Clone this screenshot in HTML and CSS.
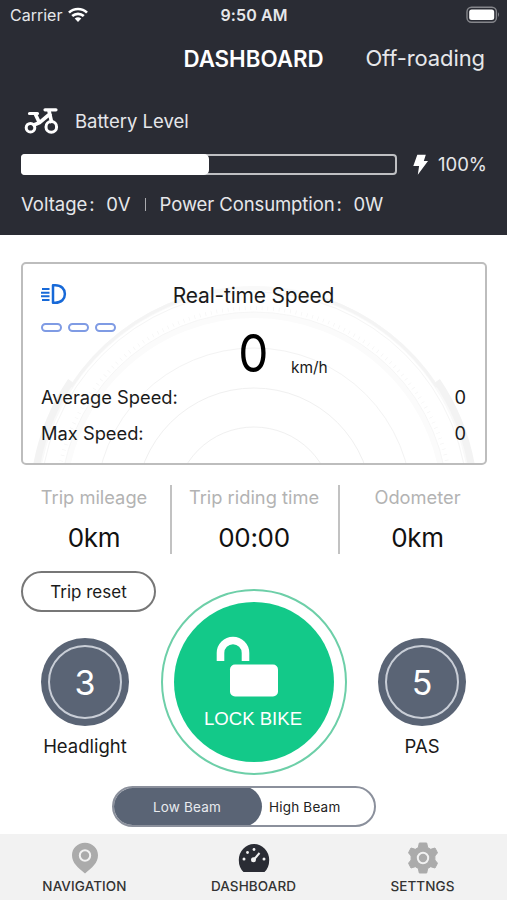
FILE: index.html
```html
<!DOCTYPE html>
<html lang="en">
<head>
<meta charset="utf-8">
<title>Dashboard</title>
<link rel="stylesheet" href="styles.css">
</head>
<body>
<header class="header">
  <div class="status">
    <div class="carrier"><span>Carrier</span>
      <svg width="20" height="16" viewBox="0 0 20 16" fill="none" stroke="#fff" stroke-width="2.7"><path d="M1 5.6C6 .8 14 .8 19 5.6M4.2 9.1c3.4-3.1 8.2-3.1 11.6 0"/><path d="M6.7 11.6Q10 8.8 13.3 11.6L10 15z" fill="#fff" stroke="none"/></svg>
    </div>
    <div class="clock">9:50 AM</div>
    <svg class="battery" width="34" height="18" viewBox="0 0 34 18"><rect x="1" y="1.2" width="29.4" height="15" rx="4.5" fill="none" stroke="#85868b" stroke-width="1.4"/><rect x="3.2" y="3.4" width="25" height="10.6" rx="2.5" fill="#fff"/><path d="M32 6.3q2 2.2 0 4.6z" fill="#85868b"/></svg>
  </div>
  <div class="titlebar"><h1 class="title">DASHBOARD</h1><span class="mode">Off-roading</span></div>
  <div class="level">
    <svg width="36" height="28" viewBox="0 0 36 28" fill="none" stroke="#fff" stroke-width="3"><circle cx="6.5" cy="20.7" r="4.3"/><circle cx="27.3" cy="19.9" r="5.3"/><path d="M5.5 6.500h8M21 2.800h11" stroke-width="3.200" stroke-linecap="round"/><path d="M11.300 7l4 8.500M8.500 18.500l7-2.800L27 6M24.800 3l3 13" stroke-width="3.600"/></svg>
    <span>Battery Level</span>
  </div>
  <div class="charge">
    <div class="bar"><div class="fill"></div></div>
    <svg width="15" height="21" viewBox="0 0 15 21"><path d="M4.3.800h8.500L10.800 7H15L4.800 20.700l1.300-8.700H.3z" fill="#fff"/></svg>
    <span class="percent">100%</span>
  </div>
  <div class="power"><span class="volt">Voltage<i class="colon">:</i>0V</span><i class="split"></i><span class="watt">Power Consumption<i class="colon">:</i>0W</span></div>
</header>

<main class="main">
  <section class="card">
    <svg class="dial" width="462" height="199" viewBox="23 265 462 199" fill="none">
      <circle cx="254" cy="507" r="79" stroke="#f0f0f0"/>
      <circle cx="254" cy="507" r="118" stroke="#f0f0f0"/>
      <circle cx="254" cy="507" r="158" stroke="#f3f3f3"/>
      <circle cx="254" cy="507" r="191" stroke="#fbfbfb" stroke-width="6"/>
      <circle cx="254" cy="507" r="194" stroke="#f4f4f4" stroke-width=".8"/>
      <circle cx="254" cy="507" r="198" stroke="#f5f5f5" stroke-width="4" stroke-dasharray=".7 5"/>
      <circle cx="254" cy="507" r="214" stroke="#f5f5f5"/>
      <circle cx="254" cy="507" r="218" stroke="#f9f9f9" stroke-width="4"/>
      <path d="M71 388A218 218 0 0 1 184 300M324 300A218 218 0 0 1 437 388" stroke="#f4f4f4" stroke-width="3"/>
      <path d="M36 470A221 221 0 0 1 71 382M472 470A221 221 0 0 0 437 382" stroke="#f3f3f3" stroke-width="7"/>
    </svg>
    <div class="card-head">
      <div class="lamps">
        <svg width="26" height="20" viewBox="0 0 26 20" fill="none" stroke="#1769d8" stroke-width="2"><path d="M12 1.3h2.3c6 0 9.600 3.700 9.600 8.700s-3.600 8.700-9.600 8.700H12z" stroke-width="2.500" stroke-linejoin="round"/><path d="M1 5h7.500M0 8.700h8.500M0 12.300h8.500M1 16h7.500" stroke-width="2"/></svg>
        <div class="pips"><i></i><i></i><i></i></div>
      </div>
      <h2 class="card-title">Real-time Speed</h2>
    </div>
    <div class="speed"><span class="value">0</span><span class="unit">km/h</span></div>
    <div class="line"><span class="avg">Average Speed:</span><span>0</span></div>
    <div class="line"><span class="max">Max Speed:</span><span>0</span></div>
  </section>

  <section class="stats">
    <div class="stat"><span class="name n1">Trip mileage</span><span class="num">0km</span></div>
    <div class="stat mid"><span class="name n2">Trip riding time</span><span class="num time">00:00</span></div>
    <div class="stat"><span class="name n3">Odometer</span><span class="num">0km</span></div>
  </section>

  <section class="controls">
    <div class="side left">
      <button class="reset">Trip reset</button>
      <div class="knob"><span>3</span></div>
      <span class="label hl">Headlight</span>
    </div>
    <div class="lock"><div class="disc">
      <svg width="64" height="62" viewBox="0 0 64 62"><path d="M4.500 25V17a12.500 12.500 0 0 1 25 0v8" fill="none" stroke="#fff" stroke-width="7.600"/><rect x="14" y="28.500" width="48" height="32" rx="5" fill="#fff"/></svg>
      <span>LOCK BIKE</span>
    </div></div>
    <div class="side right">
      <div class="knob"><span>5</span></div>
      <span class="label pas">PAS</span>
    </div>
  </section>

  <div class="beam"><span class="low">Low Beam</span><span class="high">High Beam</span></div>
</main>

<nav class="tabs">
  <div class="tab"><svg width="28" height="32" viewBox="0 0 28 32"><path d="M14 .8C6.600.8 1 6.400 1 13.200 1 21 7 25.500 14 31.500 21 25.500 27 21 27 13.200 27 6.400 21.400.8 14 .8z" fill="#ababab"/><circle cx="14" cy="13.500" r="5.200" fill="none" stroke="#f2f2f2" stroke-width="2"/></svg><span class="t1">NAVIGATION</span></div>
  <div class="tab"><svg width="32" height="32" viewBox="0 0 32 32"><path d="M5.500 30Q.8 25.500.8 18a15.200 16 0 0 1 30.400 0Q31.200 25.500 26.500 30z" fill="#2a2c34"/><path d="M15.500 18L21.500 11" stroke="#f2f2f2" stroke-width="2"/><circle cx="15.500" cy="17.800" r="2.500" fill="#f2f2f2"/><g fill="#f2f2f2"><circle cx="16" cy="7.500" r="1.400"/><circle cx="9.500" cy="10.500" r="1.400"/><circle cx="6" cy="17" r="1.500"/><circle cx="26" cy="17" r="1.500"/></g></svg><span class="t2">DASHBOARD</span></div>
  <div class="tab"><svg width="30" height="32" viewBox="0 0 30 32"><path d="M11.300 1h7.400l1 4.600 3 1.700 4.300-1.300 2.500 4.800-2.600 3.200v4l2.600 3.200-2.500 4.800-4.300-1.300-3 1.700-1 4.600h-7.400l-1-4.600-3-1.700L3 26 .5 21.200 3.100 18v-4L.5 10.800 3 6l4.300 1.300 3-1.700z" fill="#ababab" stroke="#ababab" stroke-linejoin="round"/><circle cx="15" cy="16" r="5.200" fill="none" stroke="#f2f2f2" stroke-width="2"/></svg><span class="t3">SETTNGS</span></div>
</nav>
</body>
</html>
```
FILE: styles.css
```css
* { box-sizing: border-box; }
body {
  margin: 0;
  width: 507px;
  height: 900px;
  display: flex;
  flex-direction: column;
  overflow: hidden;
  background: #fff;
  color: #1a1a1a;
  font-family: Inter, "Liberation Sans", sans-serif;
  white-space: nowrap;
}
i { font-style: normal; }
h1, h2 { margin: 0; }
svg { display: block; flex: none; }

.header {
  height: 235px;
  flex: none;
  background: #2a2c34;
  color: #e6e7ea;
}
.status {
  height: 30px;
  display: grid;
  grid-template-columns: 1fr auto 1fr;
  align-items: center;
  padding: 0 7px 0 10px;
  font-size: 16px;
}
.carrier { display: flex; align-items: center; gap: 6px; }
.clock { font-weight: 600; letter-spacing: .1px; margin-right: 2px; }
.battery { justify-self: end; }
.titlebar {
  height: 56px;
  display: grid;
  grid-template-columns: 1fr auto 1fr;
  align-items: center;
  padding: 0 22px;
  font-size: 22px;
}
.title { grid-column: 2; font-size: 22.300px; font-weight: 600; color: #fff; }
.mode { justify-self: end; letter-spacing: -.1px; }
.level {
  height: 30px;
  margin-top: 20px;
  padding-left: 24px;
  display: flex;
  align-items: center;
  gap: 15px;
  font-size: 18.500px;
}
.charge {
  height: 22px;
  margin-top: 17px;
  padding-left: 21px;
  display: flex;
  align-items: center;
}
.bar {
  flex: none;
  width: 376px;
  height: 21px;
  border: 2px solid #bfc0c3;
  border-radius: 4px;
  margin-right: 16px;
}
.fill {
  width: 188px;
  height: 21px;
  margin: -2px 0 0 -2px;
  background: #fff;
  border-radius: 4px 5px 5px 4px;
}
.percent { margin-left: 10px; font-size: 18.500px; }
.power {
  height: 30px;
  margin-top: 14px;
  padding-left: 21px;
  display: flex;
  align-items: center;
  font-size: 18.500px;
}
.colon { display: inline-block; width: 19px; padding-left: 2px; }
.split { width: 1px; height: 13px; background: #aaabaf; margin: 0 14px; }
.watt { letter-spacing: -.1px; }

.main { flex: 1; padding: 27px 20px 0 21px; }
.card {
  position: relative;
  height: 203px;
  border: 2px solid #bdbdbd;
  border-radius: 5px;
  padding: 0 19px 0 18px;
}
.dial { position: absolute; left: 0; top: 0; z-index: -1; }
.card-head { display: grid; grid-template-columns: 1fr auto 1fr; height: 68px; }
.lamps { padding-top: 20px; }
.pips { display: flex; gap: 6px; margin-top: 19px; }
.pips i { width: 21px; height: 9px; border: 2px solid #7f9be4; border-radius: 5px; }
.card-title { font-size: 21px; font-weight: 400; line-height: 26px; padding-top: 19px; letter-spacing: -.2px; }
.speed {
  height: 46px;
  display: grid;
  grid-template-columns: 1fr auto 1fr;
  align-items: center;
}
.value { grid-column: 2; font-size: 52px; line-height: 46px; color: #000; margin-top: -3px; transform: scaleX(.92); }
.unit { padding: 24px 0 0 21px; font-size: 15.500px; }
.line {
  height: 36.500px;
  display: flex;
  justify-content: space-between;
  align-items: center;
  font-size: 18.300px;
  padding-top: 1px;
}

.stats { display: grid; grid-template-columns: 149px 170px 1fr; margin-top: 20px; height: 67px; }
.stat { display: flex; flex-direction: column; align-items: center; }
.mid { border: solid #c2c2c2; border-width: 0 2px; padding-right: 2px; }
.name { font-size: 18.300px; line-height: 24px; color: #b3b3b3; }
.num { font-size: 26px; line-height: 32px; margin-top: 13px; color: #111; letter-spacing: -.3px; }
.stat:first-child { padding-right: 3px; }
.stat:last-child { padding-left: 8px; }

.controls { display: grid; grid-template-columns: 140px 186px 140px; height: 229px; margin-top: 19px; }
.side { display: flex; flex-direction: column; }
.reset {
  width: 135px;
  height: 41px;
  padding: 0;
  background: none;
  border: 2px solid #777;
  border-radius: 21px;
  font: 17px Inter, sans-serif;
  color: #1a1a1a;
}
.knob {
  width: 88px;
  height: 88px;
  padding: 7px;
  border-radius: 50%;
  background: #5a6475;
  color: #fff;
  font-size: 34px;
}
.knob span {
  display: flex;
  align-items: center;
  justify-content: center;
  width: 74px;
  height: 74px;
  border: 2px solid #c9ced7;
  border-radius: 50%;
}
.left .knob { margin: 26px 0 0 20px; }
.right .knob { margin: 67px 0 0 31px; }
.label { width: 88px; text-align: center; font-size: 18.500px; line-height: 24px; margin: 8px 0 0 20px; }
.right .label { margin-left: 31px; }
.lock {
  width: 186px;
  height: 186px;
  margin-top: 18px;
  border: 2px solid #6dcfa8;
  border-radius: 50%;
  padding: 11px;
}
.disc {
  width: 160px;
  height: 160px;
  border-radius: 50%;
  background: #13c989;
  color: #fff;
  display: flex;
  flex-direction: column;
  align-items: center;
  padding-top: 34px;
  font: 18.600px "Liberation Sans", sans-serif;
}
.disc svg { margin-right: 12px; }
.disc span { line-height: 24px; margin-top: 9px; margin-right: 2px; }

.beam {
  width: 264px;
  height: 41px;
  margin: -14px 0 0 91px;
  display: flex;
  border: 2px solid #8b909c;
  border-radius: 21px;
  overflow: hidden;
  font-size: 13.500px;
  line-height: 38px;
  letter-spacing: .2px;
}
.low { width: 150px; height: 41px; margin: -2px 0 0 -2px; line-height: 42px; text-align: center; background: #5a6475; color: #e8eaee; border-radius: 21px; }
.high { padding-left: 7px; color: #222; }

.tabs {
  height: 66px;
  flex: none;
  display: grid;
  grid-template-columns: 169px 169px 169px;
  background: #f2f2f2;
  font-size: 13.500px;
  font-weight: 500;
  color: #333;
}
.tab { display: flex; flex-direction: column; align-items: center; padding-top: 8px; }
.tab span { line-height: 18px; margin-top: 3px; letter-spacing: .1px; }
```
